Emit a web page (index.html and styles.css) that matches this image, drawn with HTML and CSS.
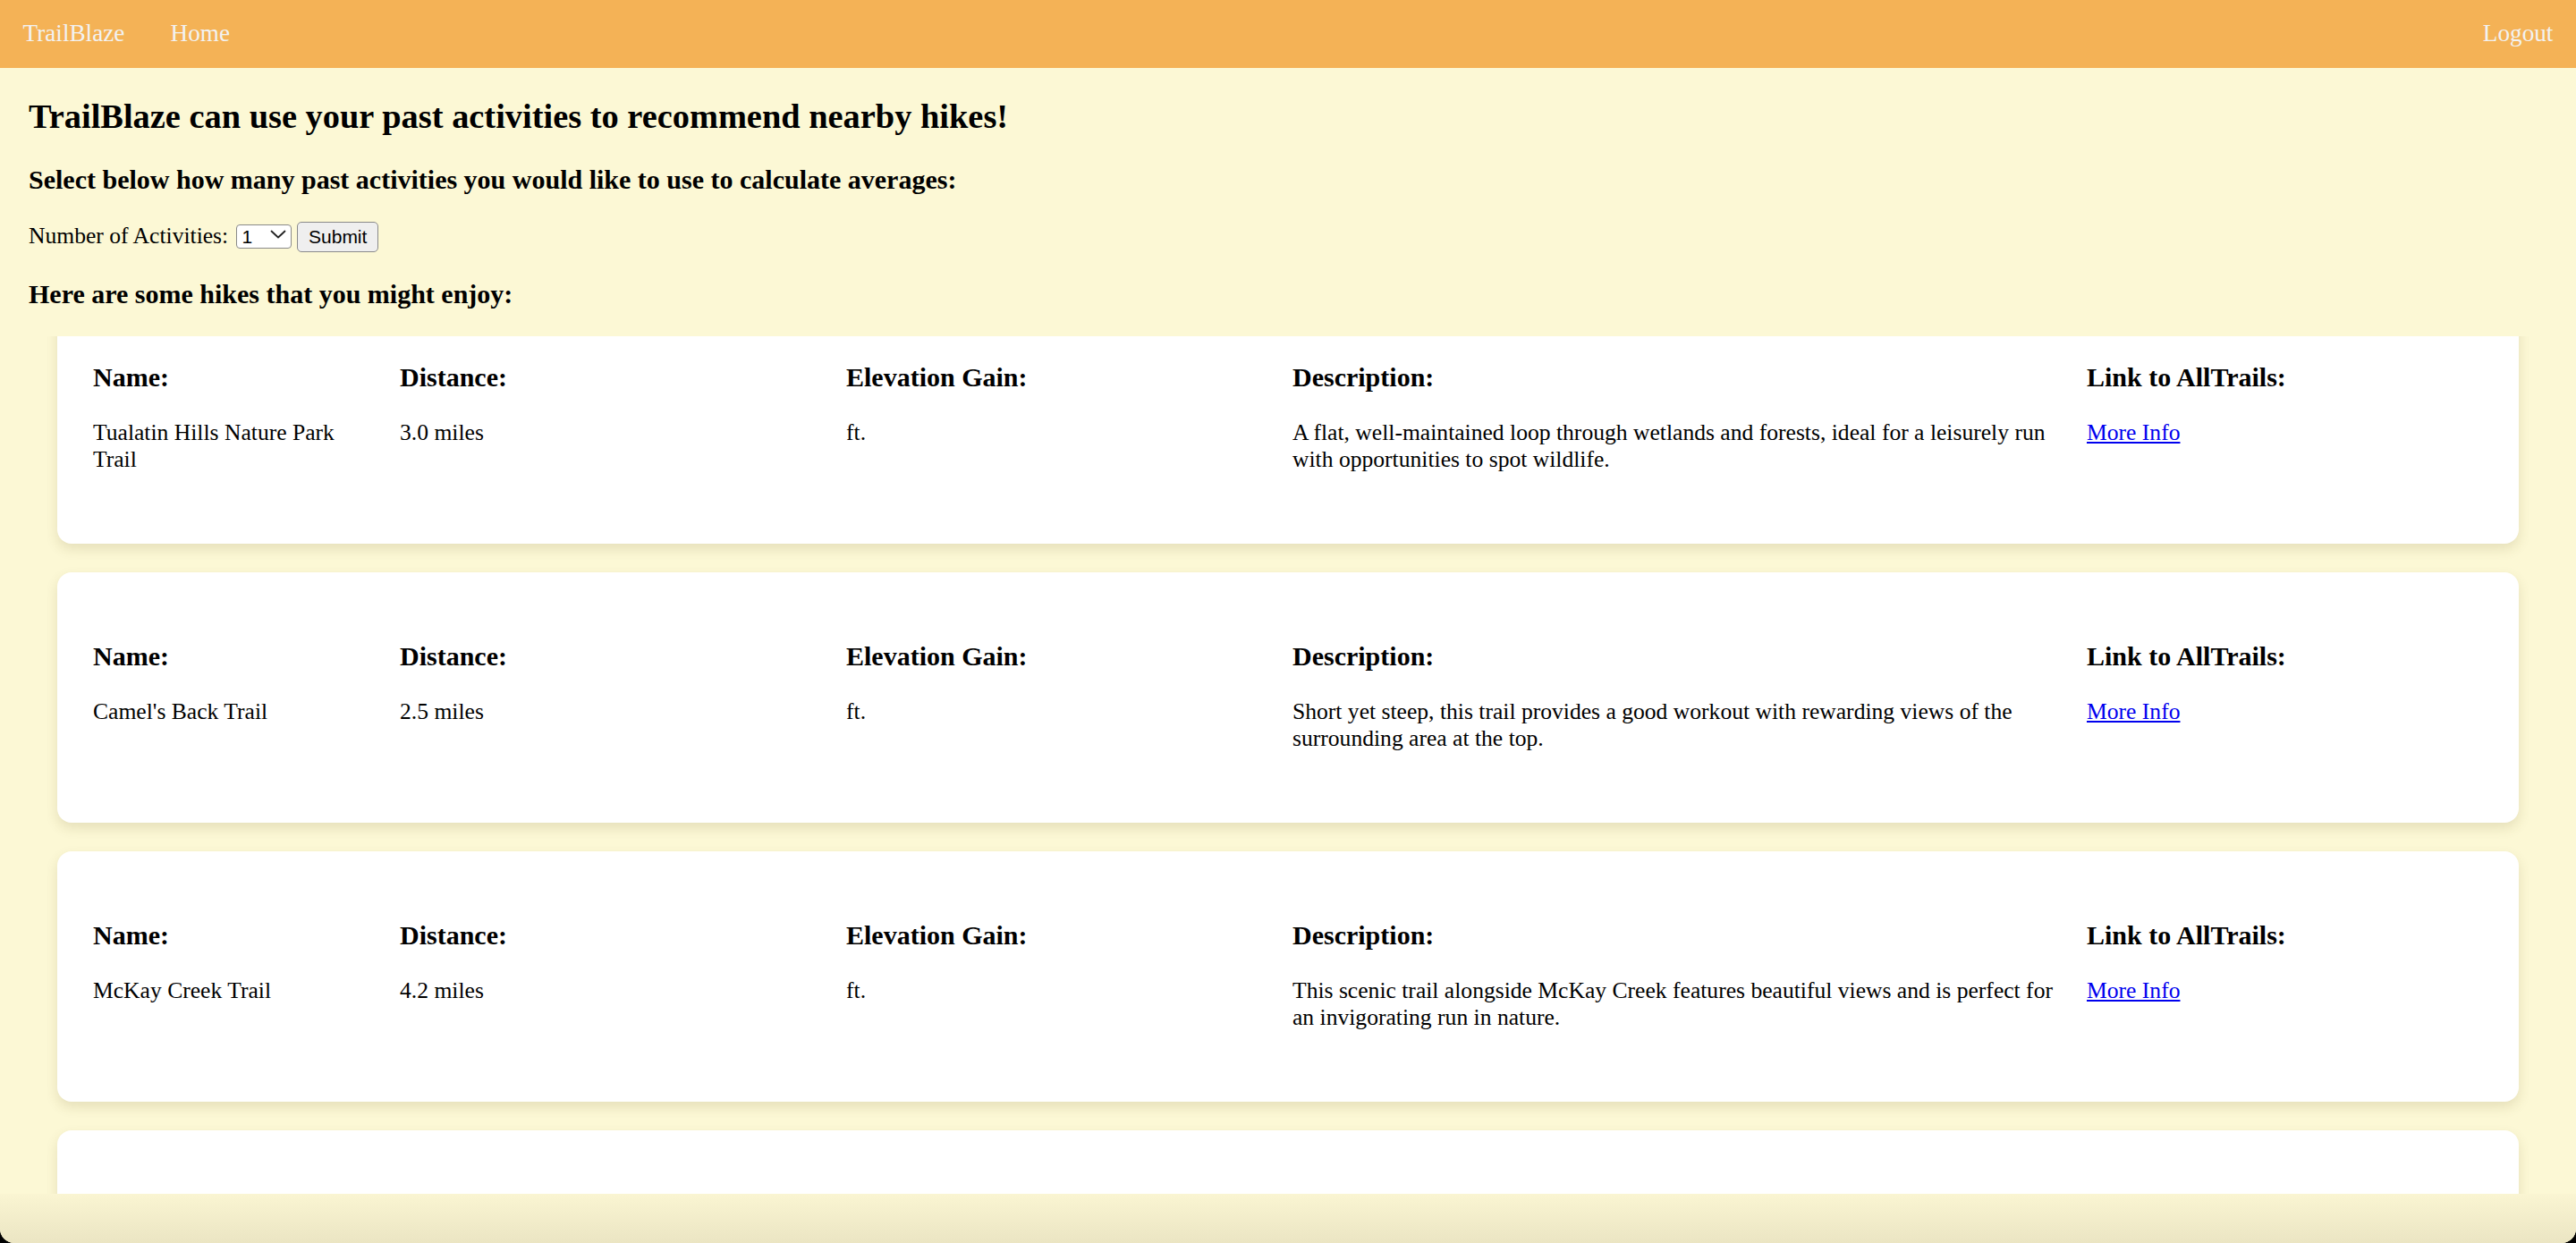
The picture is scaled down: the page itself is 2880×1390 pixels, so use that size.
FILE: index.html
```html
<!DOCTYPE html>
<html lang="en">
<head>
<meta charset="utf-8">
<title>TrailBlaze - Recommendations</title>
<link rel="stylesheet" href="styles.css">
</head>
<body>
<div class="window">
  <nav class="topnav">
    <a href="#" class="nav-link">TrailBlaze</a>
    <a href="#" class="nav-link">Home</a>
    <a href="#" class="nav-link nav-right">Logout</a>
  </nav>
  <main class="content">
    <h2 class="title">TrailBlaze can use your past activities to recommend nearby hikes!</h2>
    <h3 class="subtitle">Select below how many past activities you would like to use to calculate averages:</h3>
    <form class="activity-form">
      <label for="num">Number of Activities:</label>
      <span class="select-wrap"><select id="num" class="num-select"><option>1</option><option>2</option><option>3</option><option>4</option><option>5</option></select><svg class="chev" viewBox="0 0 18 10" width="18" height="10"><path d="M1.5 1.5 L9 8.5 L16.5 1.5" fill="none" stroke="#222" stroke-width="1.8" stroke-linecap="round" stroke-linejoin="round"/></svg></span>
      <button type="button" class="submit-btn">Submit</button>
    </form>
    <h3 class="subtitle">Here are some hikes that you might enjoy:</h3>
    <div class="hikes">
      <div class="hike-list">
        <div class="card">
          <div class="col"><h3>Name:</h3><p>Tualatin Hills Nature Park Trail</p></div>
          <div class="col"><h3>Distance:</h3><p>3.0 miles</p></div>
          <div class="col"><h3>Elevation Gain:</h3><p>ft.</p></div>
          <div class="col"><h3>Description:</h3><p>A flat, well-maintained loop through wetlands and forests, ideal for a leisurely run with opportunities to spot wildlife.</p></div>
          <div class="col"><h3>Link to AllTrails:</h3><p><a href="#">More Info</a></p></div>
        </div>
        <div class="card">
          <div class="col"><h3>Name:</h3><p>Camel's Back Trail</p></div>
          <div class="col"><h3>Distance:</h3><p>2.5 miles</p></div>
          <div class="col"><h3>Elevation Gain:</h3><p>ft.</p></div>
          <div class="col"><h3>Description:</h3><p>Short yet steep, this trail provides a good workout with rewarding views of the surrounding area at the top.</p></div>
          <div class="col"><h3>Link to AllTrails:</h3><p><a href="#">More Info</a></p></div>
        </div>
        <div class="card">
          <div class="col"><h3>Name:</h3><p>McKay Creek Trail</p></div>
          <div class="col"><h3>Distance:</h3><p>4.2 miles</p></div>
          <div class="col"><h3>Elevation Gain:</h3><p>ft.</p></div>
          <div class="col"><h3>Description:</h3><p>This scenic trail alongside McKay Creek features beautiful views and is perfect for an invigorating run in nature.</p></div>
          <div class="col"><h3>Link to AllTrails:</h3><p><a href="#">More Info</a></p></div>
        </div>
        <div class="card"></div>
      </div>
    </div>
  </main>
  <div class="window-foot"></div>
</div>
</body>
</html>
```

FILE: styles.css
```css
html {
  background: #000;
}
body {
  margin: 0;
  font-family: "Liberation Serif", "Times New Roman", serif;
  font-size: 25.6px;
  color: #000;
}
.window {
  height: 1390px;
  display: flex;
  flex-direction: column;
  background: #fcf8d5;
  border-radius: 0 0 16px 16px;
  overflow: hidden;
}
.topnav {
  flex: none;
  display: flex;
  background: #f4b256;
}
.nav-link {
  color: #f2f2f2;
  text-decoration: none;
  font-size: 27.2px;
  padding: 22.4px 25.6px;
}
.nav-right {
  margin-left: auto;
}
.content {
  flex: 1;
  min-height: 0;
  overflow: hidden;
  padding: 0 32px;
}
.title {
  font-size: 38.4px;
  margin: 32px 0;
}
.subtitle {
  font-size: 30px;
  margin: 30px 0;
}
.activity-form {
  margin: 0;
}
.select-wrap {
  position: relative;
  display: inline-block;
  margin-left: 2px;
}
.num-select {
  appearance: none;
  -webkit-appearance: none;
  width: 62px;
  height: 27px;
  box-sizing: border-box;
  border: 1.6px solid #8a8a8a;
  border-radius: 4px;
  background: #fff;
  font-family: "Liberation Sans", Arial, sans-serif;
  font-size: 21px;
  padding: 0 0 0 6px;
  color: #000;
  vertical-align: baseline;
}
.chev {
  position: absolute;
  left: 38px;
  top: 8px;
  pointer-events: none;
}
.submit-btn {
  height: 34px;
  box-sizing: border-box;
  padding: 0 12px;
  border: 1.6px solid #8a8a8a;
  border-radius: 5px;
  background: #efefef;
  font-family: "Liberation Sans", Arial, sans-serif;
  font-size: 21px;
  color: #000;
}
.hikes {
  height: 960px;
  overflow: hidden;
}
.hike-list {
  display: flex;
  flex-direction: column;
  gap: 32px;
  margin-top: -48px;
}
.card {
  flex: none;
  height: 280px;
  box-sizing: border-box;
  margin: 0 32px;
  padding: 77px 40px 0;
  background: #fff;
  border-radius: 16px;
  box-shadow: 0 6px 14px rgba(90, 80, 20, 0.14);
  display: grid;
  grid-template-columns: 343px 499px 499px 888px 1fr;
  align-items: start;
}
.col {
  padding-right: 32px;
}
.col h3 {
  font-size: 30px;
  margin: 0 0 30px;
}
.col p {
  margin: 0;
}
.col a {
  color: #0000ee;
}
.window-foot {
  flex: none;
  height: 55px;
  background: linear-gradient(#faf5d2, #ebe5c3);
}
```
